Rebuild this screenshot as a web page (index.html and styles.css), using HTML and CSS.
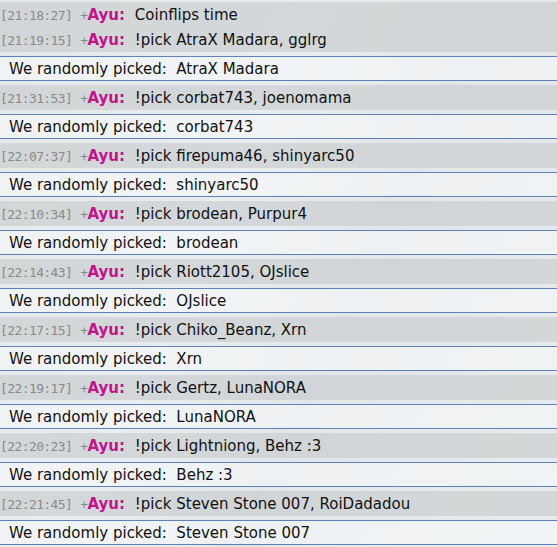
FILE: index.html
```html
<!DOCTYPE html>
<html lang="en">
<head>
    <meta charset="UTF-8">
    <meta name="viewport" content="width=device-width, initial-scale=1.0">
    <title>Chat log</title>
    <link rel="stylesheet" href="styles.css">
</head>
<body>
    <div class="chat">
        <div class="msg"><span class="ts">[21:18:27]</span><span class="rank">+</span><span class="nick">Ayu:</span> <span class="text">Coinflips time</span></div>
        <div class="msg"><span class="ts">[21:19:15]</span><span class="rank">+</span><span class="nick">Ayu:</span> <span class="text">!pick AtraX Madara, gglrg</span></div>
        <div class="bot">We randomly picked:&nbsp; AtraX Madara</div>

        <div class="msg"><span class="ts">[21:31:53]</span><span class="rank">+</span><span class="nick">Ayu:</span> <span class="text">!pick corbat743, joenomama</span></div>
        <div class="bot">We randomly picked:&nbsp; corbat743</div>

        <div class="msg"><span class="ts">[22:07:37]</span><span class="rank">+</span><span class="nick">Ayu:</span> <span class="text">!pick firepuma46, shinyarc50</span></div>
        <div class="bot">We randomly picked:&nbsp; shinyarc50</div>

        <div class="msg"><span class="ts">[22:10:34]</span><span class="rank">+</span><span class="nick">Ayu:</span> <span class="text">!pick brodean, Purpur4</span></div>
        <div class="bot">We randomly picked:&nbsp; brodean</div>

        <div class="msg"><span class="ts">[22:14:43]</span><span class="rank">+</span><span class="nick">Ayu:</span> <span class="text">!pick Riott2105, OJslice</span></div>
        <div class="bot">We randomly picked:&nbsp; OJslice</div>

        <div class="msg"><span class="ts">[22:17:15]</span><span class="rank">+</span><span class="nick">Ayu:</span> <span class="text">!pick Chiko_Beanz, Xrn</span></div>
        <div class="bot">We randomly picked:&nbsp; Xrn</div>

        <div class="msg"><span class="ts">[22:19:17]</span><span class="rank">+</span><span class="nick">Ayu:</span> <span class="text">!pick Gertz, LunaNORA</span></div>
        <div class="bot">We randomly picked:&nbsp; LunaNORA</div>

        <div class="msg"><span class="ts">[22:20:23]</span><span class="rank">+</span><span class="nick">Ayu:</span> <span class="text">!pick Lightniong, Behz :3</span></div>
        <div class="bot">We randomly picked:&nbsp; Behz :3</div>

        <div class="msg"><span class="ts">[22:21:45]</span><span class="rank">+</span><span class="nick">Ayu:</span> <span class="text">!pick Steven Stone 007, RoiDadadou</span></div>
        <div class="bot">We randomly picked:&nbsp; Steven Stone 007</div>
    </div>
</body>
</html>
```

FILE: styles.css
```css
body {
    margin: 0;
    background: linear-gradient(115deg, #e4e8ea 0%, #e9edef 40%, #e2e6e8 60%, #e8ecee 100%);
    font-family: "DejaVu Sans", Verdana, sans-serif;
    font-size: 15px;
    color: #111;
    overflow: hidden;
}
.chat {
    padding-top: 2px;
}
.msg {
    height: 24px;
    padding-top: 1px;
    line-height: 25px;
    background-color: rgba(198, 201, 203, 0.6);
    white-space: nowrap;
}
.ts,
.rank {
    font-family: "DejaVu Sans Mono", "Liberation Mono", monospace;
    font-size: 13px;
    letter-spacing: -0.6px;
    color: #8a8a8a;
}
.ts {
    margin-right: 8px;
}
.nick {
    color: #c0168a;
    font-weight: bold;
    margin-right: 5px;
}
.bot {
    margin: 4px 0;
    height: 22px;
    padding-top: 1px;
    line-height: 23px;
    padding-left: 9px;
    border-top: 1px solid #5b84b6;
    border-bottom: 1px solid #5b84b6;
    background-color: rgba(246, 249, 250, 0.6);
    white-space: nowrap;
}
```
